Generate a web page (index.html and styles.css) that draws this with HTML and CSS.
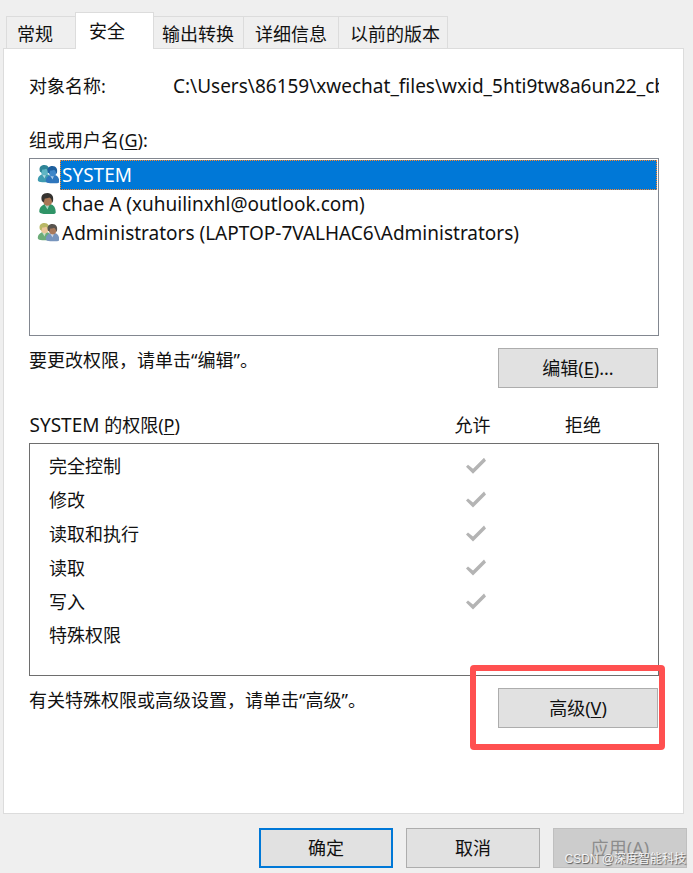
FILE: index.html
```html
<!DOCTYPE html>
<html lang="zh-CN">

<head>
    <meta charset="UTF-8">
    <meta name="viewport" content="width=device-width, initial-scale=1">
    <title>属性</title>
    <link rel="stylesheet" href="styles.css">
</head>

<body>
    <!-- shared shape for the user icons -->
    <svg class="defs" width="0" height="0" aria-hidden="true">
        <symbol id="person" viewBox="0 0 20 24">
            <path class="shirt" d="M1 20c0-4 2-6 6-8l3 2 3-2c4 1 6 4 6 9 0 1-1 2-3 2H7c-3 0-6-1-6-3z" />
            <path fill="#fff" opacity=".6" d="M7 13l3 5 2-5z" />
            <path class="face" d="M5 5c0-4 10-4 10 0v4c0 3-2 5-5 5s-5-3-5-6z" />
            <path class="hair" d="M4 9C2 3 5 0 10 0c5 0 7 4 6 9l-1 2c0-3-1-5-3-6-2 1-4 1-5 1l-1 4z" />
        </symbol>
    </svg>

    <main class="dialog">
        <div class="tabs" role="tablist">
            <button class="tab tabFirst" role="tab">常规</button>
            <button class="tab active" role="tab" aria-selected="true">安全</button>
            <button class="tab tabNarrow" role="tab">输出转换</button>
            <button class="tab" role="tab">详细信息</button>
            <button class="tab tabLast" role="tab">以前的版本</button>
        </div>

        <section class="panel" role="tabpanel">
            <div class="objectRow">
                <label for="objectName">对象名称:</label>
                <input id="objectName" class="objectName" type="text" readonly value="C:\Users\86159\xwechat_files\wxid_5hti9tw8a6un22_cb6">
            </div>

            <p class="groupLabel" id="groupLabel">组或用户名(<u>G</u>):</p>
            <ul class="userList" role="listbox" aria-labelledby="groupLabel">
                <li class="user selected" role="option" aria-selected="true">
                    <svg class="userIcon" viewBox="0 0 22 22" aria-hidden="true">
                        <use class="teal" href="#person" x="0" y="1" width="15" height="18" />
                        <use class="blue" href="#person" x="8" y="2" width="15" height="18" />
                    </svg>
                    <span class="userName">SYSTEM</span>
                </li>
                <li class="user" role="option">
                    <svg class="userIcon" viewBox="0 0 22 22" aria-hidden="true">
                        <use class="green" href="#person" x="1" y="0" width="19" height="22" />
                    </svg>
                    <span class="userName">chae A (xuhuilinxhl@outlook.com)</span>
                </li>
                <li class="user" role="option">
                    <svg class="userIcon" viewBox="0 0 22 22" aria-hidden="true">
                        <use class="blond" href="#person" x="0" y="1" width="15" height="18" />
                        <use class="grey" href="#person" x="8" y="2" width="15" height="18" />
                    </svg>
                    <span class="userName">Administrators (LAPTOP-7VALHAC6\Administrators)</span>
                </li>
            </ul>

            <div class="actionRow">
                <p>要更改权限，请单击“编辑”。</p>
                <button class="button wide">编辑(<u>E</u>)...</button>
            </div>

            <table class="permissions">
                <thead>
                    <tr>
                        <th class="permName" scope="col"><span class="latin">SYSTEM</span> 的权限(<u>P</u>)</th>
                        <th class="allow" scope="col">允许</th>
                        <th class="deny" scope="col">拒绝</th>
                    </tr>
                </thead>
                <tbody>
                    <tr>
                        <th scope="row">完全控制</th>
                        <td class="allow"><input type="checkbox" aria-label="允许完全控制" checked disabled></td>
                        <td class="deny"></td>
                    </tr>
                    <tr>
                        <th scope="row">修改</th>
                        <td class="allow"><input type="checkbox" aria-label="允许修改" checked disabled></td>
                        <td class="deny"></td>
                    </tr>
                    <tr>
                        <th scope="row">读取和执行</th>
                        <td class="allow"><input type="checkbox" aria-label="允许读取和执行" checked disabled></td>
                        <td class="deny"></td>
                    </tr>
                    <tr>
                        <th scope="row">读取</th>
                        <td class="allow"><input type="checkbox" aria-label="允许读取" checked disabled></td>
                        <td class="deny"></td>
                    </tr>
                    <tr>
                        <th scope="row">写入</th>
                        <td class="allow"><input type="checkbox" aria-label="允许写入" checked disabled></td>
                        <td class="deny"></td>
                    </tr>
                    <tr>
                        <th scope="row">特殊权限</th>
                        <td class="allow"></td>
                        <td class="deny"></td>
                    </tr>
                </tbody>
            </table>

            <div class="actionRow">
                <p>有关特殊权限或高级设置，请单击“高级”。</p>
                <div class="marked">
                    <button class="button wide">高级(<u>V</u>)</button>
                </div>
            </div>
        </section>

        <footer class="footer">
            <button class="button primary">确定</button>
            <button class="button">取消</button>
            <button class="button" disabled>应用(<u>A</u>)</button>
            <span class="watermark">CSDN @深度智能科技</span>
        </footer>
    </main>
</body>

</html>
```
FILE: styles.css
```css
* {
    box-sizing: border-box;
}

body {
    margin: 0;
    background-color: #efefef;
    color: #111;
    font-family: "Noto Sans", "Noto Sans CJK SC", sans-serif;
    font-size: 18px;
    line-height: 24px;
}

button,
input {
    font: inherit;
    color: inherit;
}

p,
ul {
    margin: 0;
    padding: 0;
}

u {
    text-decoration-thickness: 1px;
    text-underline-offset: 2px;
}

.defs {
    position: absolute;
}

.dialog {
    padding: 12px 6px 5px 3px;
}

/* tabs */
.tabs {
    display: flex;
    align-items: flex-end;
    padding-left: 3px;
}

.tab {
    height: 32px;
    padding: 3px 11px 0;
    border: 1px solid #dcdcdc;
    border-bottom: 0;
    border-left: 0;
    background-color: #efefef;
    white-space: nowrap;
}

.tabFirst {
    padding: 3px 22px 0 10px;
    border-left: 1px solid #dcdcdc;
    border-right: 0;
}

.tabNarrow {
    padding: 3px 9px 0 8px;
}

.tabLast {
    padding-right: 7px;
}

.tab.active {
    z-index: 1;
    height: 37px;
    margin-bottom: -1px;
    padding: 0 28px 0 13px;
    border-left: 1px solid #dcdcdc;
    background-color: #fff;
}

.panel {
    margin-right: 3px;
    padding: 25px 24px 85px 25px;
    border: 1px solid #dcdcdc;
    background-color: #fff;
}

.objectRow {
    display: flex;
    margin-bottom: 30px;
}

.objectRow label {
    flex: 0 0 144px;
}

.objectName {
    flex: 1;
    min-width: 0;
    height: 24px;
    padding: 0;
    border: 0;
    outline: 0;
    background: none;
    font-size: 19px;
}

.groupLabel {
    margin-bottom: 6px;
}

/* users */
.userList {
    height: 178px;
    padding: 1px;
    border: 1px solid #828790;
    font-size: 19px;
    list-style: none;
}

.user {
    display: flex;
    align-items: center;
    height: 29px;
    padding-left: 6px;
}

.userIcon {
    width: 22px;
    height: 22px;
    margin-right: 1px;
}

.userName {
    flex: 1;
    padding: 2px 1px;
    border: 1px solid transparent;
}

.selected .userName {
    border: 1px dotted #ff8728;
    background-color: #0078d7;
    color: #fff;
}

.teal { --shirt: #3f9bb0; --face: #5fb5c4; --hair: #2f8597; }
.blue { --shirt: #2f76bd; --face: #3f86c9; --hair: #1e5f9e; }
.green { --shirt: #2f9467; --face: #a87755; --hair: #353330; }
.blond { --shirt: #6cac78; --face: #edc79b; --hair: #b9b866; }
.grey { --shirt: #7895bd; --face: #a97a5c; --hair: #59544f; }

.shirt {
    fill: var(--shirt);
}

.face {
    fill: var(--face);
}

.hair {
    fill: var(--hair);
}

/* buttons */
.actionRow {
    display: flex;
    justify-content: space-between;
    padding: 12px 1px 0 0;
}

.button {
    width: 134px;
    height: 40px;
    padding: 0;
    border: 1px solid #adadad;
    background-color: #e1e1e1;
}

.button.wide {
    width: 160px;
}

.button.primary {
    border: 2px solid #0078d7;
}

.button:disabled {
    border-color: #bfbfbf;
    background-color: #ccc;
    color: #8c8c8c;
}

/* permissions */
.permissions {
    width: 100%;
    margin-top: 25px;
    border-collapse: collapse;
    table-layout: fixed;
}

.permissions th,
.permissions td {
    height: 34px;
    padding: 0;
    font-weight: normal;
    text-align: left;
}

.permissions thead th {
    height: 30px;
    padding-bottom: 6px;
}

.latin {
    font-size: 19px;
}

.permissions tbody {
    border: 1px solid #6e6e6e;
}

.permissions tbody th {
    padding-left: 19px;
}

.permissions tbody tr:first-child > * {
    height: 39px;
    padding-top: 5px;
}

.permissions tbody tr:last-child > * {
    height: 57px;
    padding-bottom: 23px;
}

.permissions .allow {
    width: 110px;
    text-align: center;
}

.permissions .deny {
    width: 131px;
    padding-right: 20px;
    text-align: center;
}

.permissions input {
    appearance: none;
    display: block;
    width: 22px;
    height: 18px;
    margin: 0 auto;
}

.permissions td.allow {
    padding-left: 7px;
}

.permissions input:checked {
    background-color: #b4b4b4;
    clip-path: polygon(1px 10px, 3px 8px, 8px 12px, 19px 1px, 21px 4px, 8px 17px);
}

/* red frame around the advanced button */
.marked {
    position: relative;
}

.marked::after {
    content: "";
    position: absolute;
    top: -23px;
    right: -7px;
    bottom: -22px;
    left: -28px;
    border: 6px solid #ff5050;
    border-radius: 4px;
    pointer-events: none;
}

.footer {
    position: relative;
    display: flex;
    justify-content: flex-end;
    gap: 13px;
    padding-top: 14px;
}

.watermark {
    position: absolute;
    right: 1px;
    bottom: 0;
    color: #f4f4f4;
    font-family: "Liberation Sans", "Noto Sans CJK SC", sans-serif;
    font-size: 12px;
    line-height: 18px;
    text-shadow: 1px 1px 1px #555;
    white-space: nowrap;
}
```
